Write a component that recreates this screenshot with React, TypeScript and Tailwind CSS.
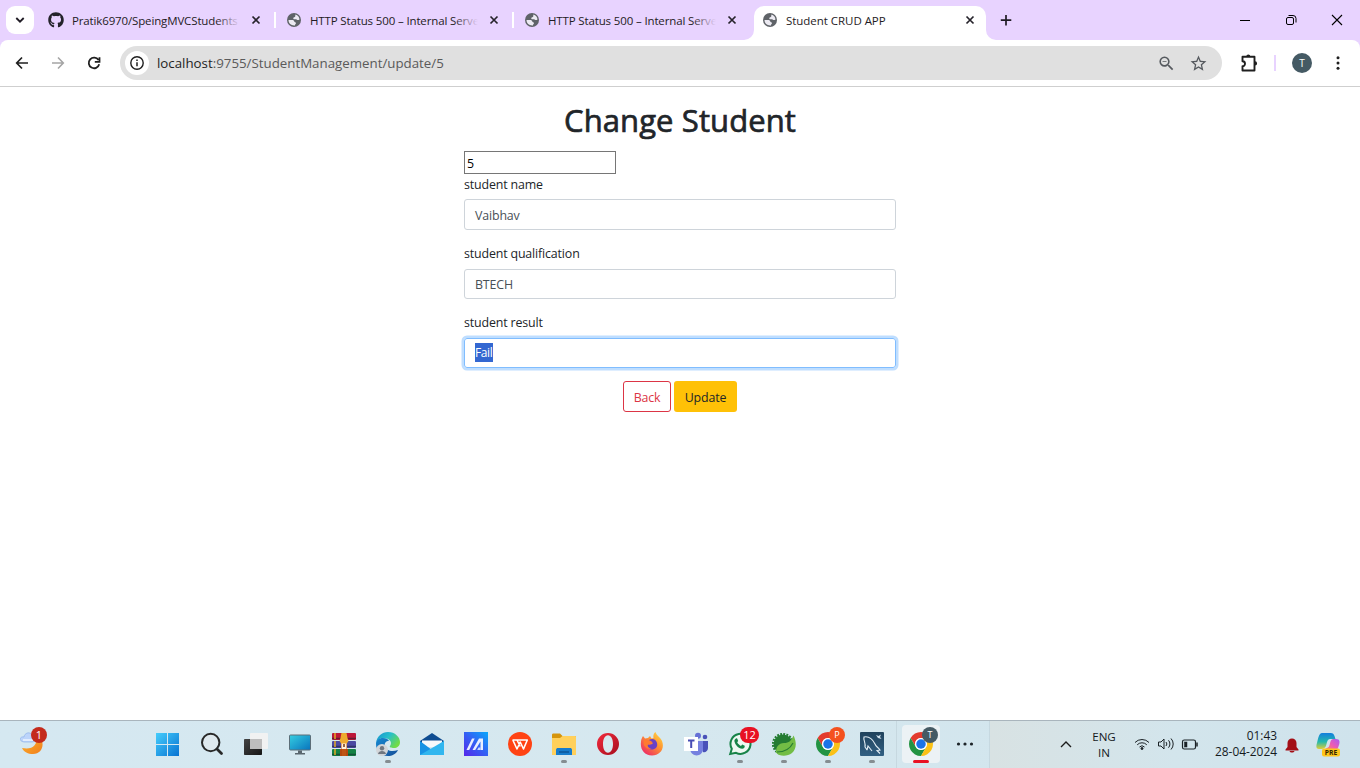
import React from "react";
import { FaGithub } from "react-icons/fa";
import { MdZoomOut, MdStarBorder } from "react-icons/md";

const GlobeIcon = () => (
  <svg width="14" height="14" viewBox="0 0 14 14" className="shrink-0">
    <circle cx="7" cy="7" r="7" fill="#5f6368" />
    <path d="M8.500 1.600c2.200.6 3.900 2.500 4 4.800-1 .9-2 .7-2.700.3-.6-.5-1-.5-1.900-.4-1.400 0-1.900-.7-1.500-1.600.3-.6 1.300-.5 1.700-1 .4-.5 0-1.300.4-2.100Z" fill="#eceaf2" />
    <path d="M1.500 7.100h3.600c1.400 0 2 .7 2.200 1.500.2.9 1.500.6 1.700 1.400.1.700-.9 1-1.100 2.500C4.300 12.800 1.600 10.600 1.500 7.100Z" fill="#eceaf2" />
  </svg>
);

const CloseIcon = () => (
  <svg width="16" height="16" viewBox="0 0 16 16" className="shrink-0">
    <path d="M4.500 4.500l7 7M11.500 4.500l-7 7" stroke="#26232b" strokeWidth="1.700" fill="none" />
  </svg>
);

const TabLabel = ({ children, fade }: { children: React.ReactNode; fade?: boolean }) => (
  <span className="relative h-[22px] w-[168px] shrink-0 overflow-hidden whitespace-nowrap pt-px text-[11.500px] leading-[22px] text-[#1f1b24]">
    <span className={fade ? "tracking-[-0.14px]" : "tracking-[-0.04px]"}>{children}</span>
    {fade && <span className="absolute inset-y-0 right-0 w-6 bg-gradient-to-r from-[#e8d3ff]/0 to-[#e8d3ff]" />}
  </span>
);

const Tab = ({ icon, label }: { icon: React.ReactNode; label: string }) => (
  <div className="flex h-10 w-[239px] shrink-0 items-center pl-3">
    <span className="flex w-6 shrink-0 items-center">{icon}</span>
    <TabLabel fade>{label}</TabLabel>
    <span className="ml-2 flex"><CloseIcon /></span>
    <span className="ml-[10px] h-4 w-[2px] shrink-0 bg-white" />
  </div>
);

const TabStrip = () => (
  <div className="flex h-10 bg-[#e8d3ff]">
    <div className="flex h-10 w-9 shrink-0 items-center pl-[6px]">
      <div className="flex h-7 w-7 items-center justify-center rounded-[9px] bg-white">
        <svg width="10" height="8" viewBox="0 0 10 8"><path d="M1.300 2l3.700 3.700L8.700 2" stroke="#1f1b24" strokeWidth="1.800" fill="none" /></svg>
      </div>
    </div>
    <Tab icon={<FaGithub size={16} color="#24232b" />} label="Pratik6970/SpeingMVCStudents" />
    <div className="-ml-px flex"><Tab icon={<span className="ml-px flex"><GlobeIcon /></span>} label="HTTP Status 500 – Internal Serve" /></div>
    <div className="-ml-px flex h-10 w-[232px] shrink-0 items-center pl-[13px]">
      <span className="flex w-[23px] shrink-0 items-center"><GlobeIcon /></span>
      <TabLabel fade>HTTP Status 500 – Internal Serve</TabLabel>
      <span className="ml-2 flex"><CloseIcon /></span>
    </div>
    <svg width="10" height="40" viewBox="0 0 10 40" className="shrink-0"><path d="M0 40A10 10 0 0 0 10 30V40Z" fill="#fff" /></svg>
    <div className="flex h-[34px] w-[232px] shrink-0 self-end rounded-t-[10px] bg-white pl-[9px] pb-[6px]">
      <div className="flex items-center">
        <span className="flex w-[23px] items-center"><GlobeIcon /></span>
        <TabLabel>Student CRUD APP</TabLabel>
        <span className="ml-2 flex"><CloseIcon /></span>
      </div>
    </div>
    <svg width="10" height="40" viewBox="0 0 10 40" className="shrink-0"><path d="M10 40A10 10 0 0 1 0 30V40Z" fill="#fff" /></svg>
    <svg width="20" height="40" viewBox="0 0 20 40"><path d="M10 15v10.500M4.800 20.200h10.500" stroke="#1f1b24" strokeWidth="1.700" /></svg>
    <div className="ml-auto flex h-10 items-center">
      <svg width="46" height="40" viewBox="0 0 46 40"><path d="M18 20.500h10" stroke="#000" /></svg>
      <svg width="46" height="40" viewBox="0 0 46 40" fill="none" stroke="#000"><rect x="18.500" y="17.500" width="7" height="7" rx="1.500" /><path d="M20.500 15.500h4.500a3 3 0 0 1 3 3v4" /></svg>
      <svg width="46" height="40" viewBox="0 0 46 40"><path d="M18 15l10 10M28 15l-10 10" stroke="#000" strokeWidth="1.100" /></svg>
    </div>
  </div>
);

const Toolbar = () => (
  <div className="bg-[#e8d3ff]">
    <div className="flex h-[47px] items-center rounded-t-[8px] border-b border-[#cfcfcf] bg-white">
      <svg width="120" height="46" viewBox="0 0 120 46" fill="none" className="shrink-0">
        <path d="M28 23H17M22 17.500L16.700 23l5.300 5.500" stroke="#1f1f1f" strokeWidth="1.700" />
        <path d="M52 23h11M58 17.500l5.300 5.500-5.300 5.500" stroke="#a5a5a5" strokeWidth="1.600" />
        <path d="M98.500 20A5.300 5.300 0 1 0 99.200 24.300M99.500 17.200v4.600h-4.700" stroke="#1f1f1f" strokeWidth="1.800" />
      </svg>
      <div className="flex h-[34px] w-[1102px] shrink-0 items-center rounded-full bg-[#e0e0e0] pl-[5px] pr-[14px]">
        <span className="flex h-6 w-6 items-center justify-center rounded-full bg-white">
          <svg width="14" height="14" viewBox="0 0 14 14" fill="none" stroke="#1f1f1f"><circle cx="7" cy="7" r="6.200" strokeWidth="1.400" /><path d="M7 6.300v4M7 3.600v1.400" strokeWidth="1.500" /></svg>
        </span>
        <span className="ml-2 text-[13.300px] leading-5 text-[#5a5a5a]"><span className="text-[#1f1f1f]">localhost</span>:9755/StudentManagement/update/5</span>
        <MdZoomOut className="ml-auto" size={19} color="#55595e" />
        <MdStarBorder className="ml-[13px]" size={19} color="#55595e" />
      </div>
      <svg width="22" height="22" viewBox="0 0 22 22" className="ml-4 shrink-0" fill="none">
        <path d="M4.500 4.800h12v13.700h-12v-4.200a2.500 2.500 0 0 0 0-5Z" stroke="#1f1f1f" strokeWidth="1.900" strokeLinejoin="round" />
        <path d="M8.300 4.500a2 2 0 0 1 4 0ZM17 9.300a2 2 0 0 1 0 4.200Z" fill="#1f1f1f" />
      </svg>
      <span className="ml-[14px] h-4 w-[2px] shrink-0 bg-[#e8d3ff]" />
      <span className="ml-4 flex h-5 w-5 shrink-0 items-center justify-center rounded-full bg-[#455a64] text-[10px] text-white">T</span>
      <svg width="10" height="16" viewBox="0 0 10 16" className="ml-[21px] shrink-0" fill="#1f1f1f"><circle cx="5" cy="2.700" r="1.500" /><circle cx="5" cy="8" r="1.500" /><circle cx="5" cy="13.300" r="1.500" /></svg>
    </div>
  </div>
);

const Form = () => (
  <main className="flex min-h-0 flex-1 flex-col items-center bg-white pt-[13px] text-[12.400px] tracking-[-0.15px] text-[#212529]">
    <h1 className="h-[51px] whitespace-nowrap text-[31px] font-normal leading-[40px] tracking-[0.1px] [-webkit-text-stroke:0.7px_#212529]">Change Student</h1>
    <div className="w-[432px]">
      <div className="h-[23px] w-[152px] border border-[#767676] pl-[2px] leading-[23px] text-black">5</div>
      <div className="h-[25px] pt-px leading-[20px]">student name</div>
      <div className="h-[31px] rounded-[3px] border border-[#ced4da] px-[10px] leading-[31px] text-[#495057]">Vaibhav</div>
      <div className="mt-[13px] h-[26px] pt-px leading-[20px]">student qualification</div>
      <div className="h-[30px] rounded-[3px] border border-[#ced4da] px-[10px] leading-[29px] text-[#495057]">BTECH</div>
      <div className="mt-[13px] h-[26px] pt-px leading-[20px]">student result</div>
      <div className="flex h-[30px] items-center rounded-[3px] border border-[#80bdff] px-[10px] shadow-[0_0_0_2.500px_#bfdeff]">
        <span className="mb-px h-[19px] w-[18px] whitespace-nowrap bg-[#3367d1] text-[12px] leading-[20px] tracking-[-0.400px] text-white">Fail</span>
      </div>
      <div className="mt-[13px] flex justify-center gap-[3px]">
        <button className="h-[31px] w-[48px] rounded-[3px] border border-[#dc3545] pt-[4px] text-[#dc3545]">Back</button>
        <button className="h-[31px] w-[63px] rounded-[3px] bg-[#ffc107] pt-[4px]">Update</button>
      </div>
    </div>
  </main>
);

const I = ({ children }: { children: React.ReactNode }) => (
  <svg width="24" height="24" viewBox="0 0 24 24" fill="none">{children}</svg>
);

const Windows = () => (
  <I>
    <defs><linearGradient id="win" x1="0" y1="0" x2="1" y2="1"><stop stopColor="#45cdfc" /><stop offset="1" stopColor="#0873d2" /></linearGradient></defs>
    <path d="M0 1h11v11H0ZM12 1h11v11H12ZM0 13h11v11H0ZM12 13h11v11H12Z" fill="url(#win)" />
  </I>
);
const Search = () => (
  <I><circle cx="10.700" cy="10.500" r="8.700" stroke="#282828" strokeWidth="2" fill="#dfe9ee" /><path d="M17 17l4.500 4.500" stroke="#282828" strokeWidth="2.800" strokeLinecap="round" /></I>
);
const TaskView = () => (
  <I>
    <defs><linearGradient id="tv" x1="0" y1="0" x2="1" y2="1"><stop stopColor="#444" /><stop offset="1" stopColor="#151515" /></linearGradient></defs>
    <rect x="0" y="7" width="18" height="16" rx=".8" fill="url(#tv)" /><rect x="6" y="1" width="18" height="16" rx=".8" fill="#f1f2f2" /><path d="M6 7h12v10H6Z" fill="#bdbdbd" />
  </I>
);
const Monitor = () => (
  <I>
    <defs><linearGradient id="mon" x1="0" y1="0" x2="1" y2="1"><stop stopColor="#35cee1" /><stop offset="1" stopColor="#0873bd" /></linearGradient></defs>
    <rect x="1.500" y="3" width="21" height="15" rx="1" fill="url(#mon)" stroke="#5c6e78" /><path d="M10 18.500h4V21h3v1.500H7V21h3Z" fill="#59666e" />
  </I>
);
const WinRar = () => (
  <I>
    <rect y="1" width="24" height="7" rx="1" fill="#bd1739" /><rect y="9" width="24" height="7" rx="1" fill="#4b49a2" /><rect y="17" width="24" height="7" rx="1" fill="#148245" />
    <path d="M0 6.500h24M0 14.500h24M0 22.500h24" stroke="#16222b" opacity=".5" strokeWidth="1.500" />
    <path d="M3 1v6M3 9v6M3 17v6" stroke="#e4ab25" strokeWidth="1.500" />
    <path d="M9 2h6v22H9Z" fill="#be5414" /><path d="M9.500 1h5l1 5 1 3-2 3h-5l-2-3 1-3Z" fill="#eeaa2f" /><path d="M9.500 11.500h5V17h-5Z" fill="#fff0dc" /><path d="M12 12v3" stroke="#753611" strokeWidth="1.500" /><path d="M8 17h2v7H8ZM14 17h2v7h-2Z" fill="#b5470e" />
  </I>
);
const Edge = () => (
  <I>
    <defs>
      <linearGradient id="ed1" x1="0" y1="0" x2="1" y2=".6"><stop stopColor="#168fd0" /><stop offset=".5" stopColor="#26bfcb" /><stop offset="1" stopColor="#72dc45" /></linearGradient>
      <linearGradient id="ed2" x1="0" y1="0" x2="1" y2="1"><stop stopColor="#1689d1" /><stop offset="1" stopColor="#164f99" /></linearGradient>
    </defs>
    <path d="M0 11C1 4 6 0 12 0c7 0 12 5 12 10 0 4-3 6-6 6-3 0-5-1-4-2 3-4-1-8-6-8-4 0-7 2-8 5Z" fill="url(#ed1)" />
    <path d="M0 12c0-4 3-6 7-6 3 0 5 1 6 3-3 0-5 2-4 5 1 5 7 6 13 4-2 4-6 6-10 6C5 24 0 19 0 12Z" fill="url(#ed2)" />
    <circle cx="6" cy="18" r="6" fill="#d2d5d8" /><circle cx="6" cy="16.300" r="2.200" fill="#707780" /><path d="M2 22c.5-4 7.500-4 8 0Z" fill="#707780" />
  </I>
);
const Mail = () => (
  <I>
    <path d="M0 9L12 1l12 8v4H0Z" fill="#0e4c91" /><path d="M2 8.500h20V15H2Z" fill="#f7f9fb" /><path d="M0 9l12 9L24 9v14H0Z" fill="#1993e4" /><path d="M0 23L24 9v14Z" fill="#31b6ef" />
  </I>
);
const Asus = () => (
  <I>
    <defs><linearGradient id="as" x1="0" y1="1" x2="1" y2="0"><stop stopColor="#5526ea" /><stop offset=".5" stopColor="#3460f4" /><stop offset="1" stopColor="#08a8fa" /></linearGradient></defs>
    <path d="M0 0h24v24H0Z" fill="url(#as)" />
    <path d="M2.500 18L8 6.500h2.700L5.200 18ZM8.500 18L15 6.500h4V18h-2.500V9.500L11.200 18Z" fill="#e9efff" /><path d="M14.500 15.500h2V18h-3.300Z" fill="#c8d9ff" />
  </I>
);
const Wps = () => (
  <I><circle cx="12" cy="12" r="12" fill="#ff4314" /><path d="M4.500 8h14.800L15.500 17l-3.300-7L9 17 4.800 8M9 8l3.200 6.500" stroke="#fff" strokeWidth="1.600" strokeLinejoin="round" /></I>
);
const Folder = () => (
  <I>
    <path d="M0 3c0-1 .5-1.500 1.500-1.500H8L10.500 4H23c.7 0 1 .4 1 1v5H0Z" fill="#d5950c" /><path d="M0 6h8l2.500-2H23c.7 0 1 .4 1 1v18H0Z" fill="#ffd05b" />
    <path d="M4 23v-5c0-1.500 1-2 2-2h12c1 0 2 .5 2 2v5Z" fill="#167ccc" /><path d="M7 20h10" stroke="#0b5698" strokeWidth="1.500" />
  </I>
);
const Opera = () => (
  <I>
    <defs><linearGradient id="op" x1="0" y1="0" x2="1" y2="1"><stop stopColor="#f42b3d" /><stop offset="1" stopColor="#a50d1d" /></linearGradient></defs>
    <path fillRule="evenodd" d="M12 1a11 11 0 1 0 0 22 11 11 0 0 0 0-22Zm0 2.300c3 0 5 3.800 5 8.700s-2 8.700-5 8.700-5-3.800-5-8.700 2-8.700 5-8.700Z" fill="url(#op)" />
  </I>
);
const Firefox = () => (
  <I>
    <defs><linearGradient id="ff" x1="1" y1="0" x2=".2" y2="1"><stop stopColor="#ffe34a" /><stop offset=".45" stopColor="#ff9630" /><stop offset="1" stopColor="#ed2768" /></linearGradient></defs>
    <path d="M3 4l2 2.500 3-.5 2-2 1.500 2.500 2-.5c-.5-3 .5-5 2-6 1 4 5 5 6.500 9 3 8-2 14.500-10 14.500C4 23.500 0 17 1 10c0-3 1-4 2-6Z" fill="url(#ff)" />
    <path d="M8 9c2-3 8-3 9 2 1 4-1.500 6.500-5.500 6.500-3.500-.5-5.500-3-4-5.500 2 1.500 4.500.5 5.500-1-2 0-4-1-5-2Z" fill="#6841c5" /><path d="M4 8c2-1 6 0 9 2.500-2 0-2 2-5 2-1 2 1 4 4 4-5 2-10-3-8-8.500Z" fill="#ff7a31" />
  </I>
);
const Teams = () => (
  <I>
    <circle cx="14" cy="3.800" r="3" fill="#6670d6" /><circle cx="21" cy="5" r="2.300" fill="#4951b8" /><path d="M17 9h7v7c0 3-3 5-5 4Z" fill="#4851b9" /><path d="M6 9h13v8c0 8-12 9-13 0Z" fill="#7580df" /><path d="M0 5h14v14H0Z" fill="#fff" /><path d="M4 8.500h6.500M7.200 8.500v7.500" stroke="#484db4" strokeWidth="2" />
  </I>
);
const WhatsApp = () => (
  <I>
    <path d="M2.200 22l1.600-5.200A10 10 0 1 1 8 20.800Z" fill="#eef8f2" stroke="#178348" strokeWidth="2" />
    <path d="M8 6.500c.8-.4 1.300 0 1.500.7l.7 1.800-1 1.300c.8 1.600 2 2.800 3.800 3.600l1.200-1.300 2.500 1.200c.4 2-1.200 3-2.500 3-4-.5-7-3.800-7.800-7.500-.2-1 .5-2.200 1.600-2.800Z" fill="#178348" />
  </I>
);
const Spring = () => (
  <I>
    <circle cx="11" cy="12" r="9.500" fill="#237c32" /><circle cx="11" cy="12" r="10" stroke="#237c32" strokeWidth="2.200" strokeDasharray="1.900 1.240" />
    <path d="M21.500 3.500c3.500 7 3 13.500-1.500 17.500-5 4-13 3.500-16-.5 0-6 2.500-9 8-9.500 5 0 7.500-2.500 9.500-7.500Z" fill="#72bd45" /><path d="M5 20c7 0 13-3 16-9" stroke="#287d34" strokeWidth="1.200" />
  </I>
);
const Chrome = () => (
  <svg width="24" height="24" viewBox="0 0 48 48">
    <path d="M24 12H44.780A24 24 0 0 0 3.220 12L13.610 30A12 12 0 0 1 24 12Z" fill="#e33b2e" />
    <path d="M13.610 30L3.220 12A24 24 0 0 0 24 48L34.390 30A12 12 0 0 1 13.610 30Z" fill="#229342" />
    <path d="M34.390 30L24 48A24 24 0 0 0 44.780 12H24A12 12 0 0 1 34.390 30Z" fill="#fbc116" />
    <circle cx="24" cy="24" r="12" fill="#fff" /><circle cx="24" cy="24" r="9.500" fill="#1a73e8" />
  </svg>
);
const MySql = () => (
  <I>
    <defs><linearGradient id="my" x1="0" y1="0" x2="0" y2="1"><stop stopColor="#20425c" /><stop offset="1" stopColor="#315f82" /></linearGradient></defs>
    <rect width="24" height="24" rx="1" fill="url(#my)" />
    <path d="M7 18l-2-3C6 11 3 8 4 5c5-1 9 3 11 7 1 3 3 3 5 6l-3 .5 3 3M7 18l1-4 4 5" stroke="#e2edf4" strokeWidth="1.100" />
    <path d="M16 3l2.500 1L21 2.500 20 5l1.500 2L18 6Z" fill="#d1e1ec" />
  </I>
);
const Weather = () => (
  <I>
    <defs><linearGradient id="moon" x1="0" y1="0" x2="1" y2="1"><stop stopColor="#ffb52d" /><stop offset="1" stopColor="#f07e1d" /></linearGradient></defs>
    <path d="M2 16c10 2 15-2 16-13 8 7 5 19-5 19-5 0-9-2-11-6Z" fill="url(#moon)" /><path d="M4 10C-2 9 0 4 4 5c1-6 9-5 8 0 4 0 4 5 0 5Z" fill="#bcd4fa" stroke="#8fb1e9" strokeWidth=".7" /><path d="M3 8h10" stroke="#eff6ff" strokeWidth="1.500" />
  </I>
);

const apps: { icon: React.ReactNode; run?: boolean; badge?: string; badgeClass?: string }[] = [
  { icon: <Windows /> },
  { icon: <Search /> },
  { icon: <TaskView /> },
  { icon: <Monitor /> },
  { icon: <WinRar /> },
  { icon: <Edge />, run: true },
  { icon: <Mail /> },
  { icon: <Asus /> },
  { icon: <Wps /> },
  { icon: <Folder />, run: true },
  { icon: <Opera /> },
  { icon: <Firefox /> },
  { icon: <Teams /> },
  { icon: <WhatsApp />, run: true, badge: "12", badgeClass: "left-[22px] w-[19px] bg-[#e81123] text-[11px]" },
  { icon: <Spring />, run: true },
  { icon: <Chrome />, run: true, badge: "P", badgeClass: "left-[23px] w-4 bg-[#f4511e] text-[9px]" },
  { icon: <MySql />, run: true },
];

const Taskbar = () => (
  <footer className="flex h-12 shrink-0 border-t border-[#a9b5bd] bg-gradient-to-r from-[#d5e8f1] via-[#d6e8ef] to-[#cfe3ec]">
    <div className="relative flex w-[146px] shrink-0 pl-5 pt-[11px]">
      <Weather />
      <span className="absolute left-[31px] top-[6px] flex h-4 w-4 items-center justify-center rounded-full bg-[#c42b1c] text-[11px] text-white">1</span>
    </div>
    {apps.map((a, i) => (
      <div key={i} className="relative flex w-11 shrink-0 flex-col items-center pt-[11px]">
        {a.icon}
        {a.run && <span className="mt-1 h-[3px] w-[6px] rounded-full bg-[#858d91]" />}
        {a.badge && <span className={"absolute top-[6px] flex h-4 items-center justify-center rounded-full text-white " + a.badgeClass}>{a.badge}</span>}
      </div>
    ))}
    <div className="ml-[2px] flex w-[94px] shrink-0 items-start border-x border-[#c6d8e0] pl-[5px] pt-1">
      <div className="relative flex h-[38px] w-[38px] flex-col items-center rounded-[4px] bg-[#ecf2f5] pt-[7px]">
        <Chrome />
        <span className="absolute left-[20px] top-[2px] flex h-4 w-4 items-center justify-center rounded-full bg-[#455a64] text-[9px] text-white">T</span>
        <span className="mt-[4px] h-[3px] w-4 rounded-full bg-[#e81123]" />
      </div>
      <svg width="18" height="6" viewBox="0 0 18 6" className="ml-4 mt-4" fill="#1d2428"><circle cx="2.500" cy="3" r="1.600" /><circle cx="9" cy="3" r="1.600" /><circle cx="15.500" cy="3" r="1.600" /></svg>
    </div>
    <div className="flex flex-1 items-center bg-gradient-to-r from-[#d8e2e3] via-[#d3e5ec] to-[#cfe3ec] text-[11.600px] leading-4 text-[#151a1d]">
      <svg width="12" height="8" viewBox="0 0 12 8" className="mb-[2px] ml-[70px] shrink-0" fill="none"><path d="M1 7l5-5 5 5" stroke="#1b1b1b" strokeWidth="1.400" /></svg>
      <div className="ml-[15px] w-[34px] shrink-0 text-center">ENG<br />IN</div>
      <svg width="66" height="18" viewBox="0 0 66 18" className="ml-[13px] mb-[2px] shrink-0" fill="none" stroke="#1b2226">
        <path d="M1 7.500a9.700 9.700 0 0 1 14 0M3.200 9.800a6.700 6.700 0 0 1 9.600 0M5.500 12a3.500 3.500 0 0 1 5 0" /><circle cx="8" cy="13.500" r="1" fill="#1b2226" />
        <path d="M24.500 7h2.500l3-3v10l-3-3h-2.500ZM32 7a3 3 0 0 1 0 4M34.500 5.300a5.500 5.500 0 0 1 0 7.400M37 3.500a8 8 0 0 1 0 11" />
        <rect x="48.500" y="5" width="13" height="9" rx="1.800" strokeWidth="1.200" /><rect x="50.500" y="7" width="2.500" height="5" fill="#1b2226" strokeWidth=".5" /><path d="M63 7.500v4" strokeWidth="1.500" />
      </svg>
      <div className="ml-auto w-[75px] whitespace-nowrap pb-[3px] text-right text-[11.900px]">01:43<br />28-04-2024</div>
      <svg width="14" height="16" viewBox="0 0 14 16" className="ml-2 shrink-0" fill="#a30f16"><path d="M2.500 6a4.500 4.500 0 0 1 9 0v4l2 2.500v1H.5v-1l2-2.500ZM4.500 14h5c-.5 2-4.500 2-5 0Z" /></svg>
      <svg width="26" height="26" viewBox="0 0 26 26" className="ml-[17px] mr-[18px] shrink-0">
        <defs>
          <linearGradient id="c1" x1="0" y1="0" x2="0" y2="1"><stop stopColor="#137ede" /><stop offset=".55" stopColor="#25b9ac" /><stop offset="1" stopColor="#e0ce36" /></linearGradient>
          <linearGradient id="c2" x1="1" y1="0" x2="0" y2="1"><stop stopColor="#a75af5" /><stop offset=".5" stopColor="#ed5bb1" /><stop offset="1" stopColor="#ff9844" /></linearGradient>
        </defs>
        <path d="M6 1h9c3 0 3.500 3 4.500 6H14c-3 0-3 4-4 7-1 2-2.500 3-4.500 3H3c-3 0-3-3-2-6C2 7 3 1 6 1Z" fill="url(#c1)" /><path d="M11 16c3-1 2.500-4 3.500-6.500C15 7.500 16.500 7 18.500 7H20c4 0 4 3 3 6-1 3-2 6-5 6h-8c-2 0-1-2.500 1-3Z" fill="url(#c2)" />
        <rect x="6" y="16.500" width="18" height="8" rx="2" fill="#ffc61a" />
        <text x="15" y="23" fontSize="6.700" fontWeight="700" fill="#332400" textAnchor="middle">PRE</text>
      </svg>
    </div>
  </footer>
);

export default function App() {
  return (
    <div className="flex h-[768px] w-[1360px] flex-col overflow-hidden bg-white font-['Open_Sans','Noto_Sans',sans-serif]">
      <TabStrip />
      <Toolbar />
      <Form />
      <Taskbar />
    </div>
  );
}
